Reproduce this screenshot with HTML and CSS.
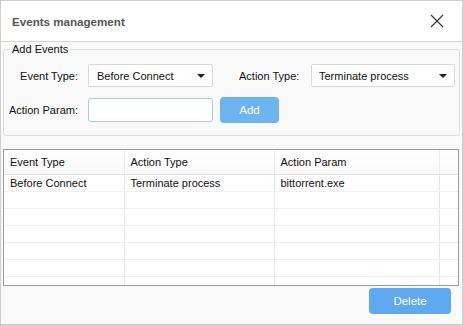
FILE: index.html
```html
<!DOCTYPE html>
<html lang="en">
<head>
    <meta charset="UTF-8">
    <title>Events management</title>
    <link rel="stylesheet" href="styles.css">
</head>
<body>
    <div class="window">
        <div class="titlebar">
            <span class="title">Events management</span>
            <svg class="close" width="14" height="14" viewBox="0 0 14 14">
                <path d="M1 1 L13 13 M13 1 L1 13" stroke="#333" stroke-width="1.2" fill="none"/>
            </svg>
        </div>

        <div class="content">
            <!-- Add Events group -->
            <fieldset class="group">
                <legend>Add Events</legend>
                <div class="row">
                    <label class="label">Event Type:</label>
                    <div class="select">
                        <span>Before Connect</span>
                        <span class="arrow"></span>
                    </div>
                    <label class="label label-action">Action Type:</label>
                    <div class="select select-wide">
                        <span>Terminate process</span>
                        <span class="arrow"></span>
                    </div>
                </div>
                <div class="row row-param">
                    <label class="label">Action Param:</label>
                    <input type="text" class="input">
                    <button class="btn btn-add">Add</button>
                </div>
            </fieldset>

            <!-- Events list -->
            <div class="grid">
                <table>
                    <thead>
                        <tr>
                            <th class="col-event">Event Type</th>
                            <th class="col-action">Action Type</th>
                            <th class="col-param">Action Param</th>
                            <th class="col-fill"></th>
                        </tr>
                    </thead>
                    <tbody>
                        <tr><td>Before Connect</td><td>Terminate process</td><td>bittorrent.exe</td><td></td></tr>
                        <tr><td></td><td></td><td></td><td></td></tr>
                        <tr><td></td><td></td><td></td><td></td></tr>
                        <tr><td></td><td></td><td></td><td></td></tr>
                        <tr><td></td><td></td><td></td><td></td></tr>
                        <tr><td></td><td></td><td></td><td></td></tr>
                        <tr><td></td><td></td><td></td><td></td></tr>
                    </tbody>
                </table>
            </div>

            <div class="footer">
                <button class="btn btn-delete">Delete</button>
            </div>
        </div>
    </div>
</body>
</html>
```

FILE: styles.css
```css
* {
    box-sizing: border-box;
    margin: 0;
    padding: 0;
}

body {
    font-family: "Liberation Sans", Arial, sans-serif;
    font-size: 11px;
    color: #111;
    background: #fff;
}

.window {
    width: 463px;
    height: 325px;
    border: 1px solid #cfcfcf;
    background-color: #f9f9f9;
    overflow: hidden;
}

.titlebar {
    height: 41px;
    background-color: #fff;
    border-bottom: 1px solid #d6d6d6;
    display: flex;
    align-items: center;
    justify-content: space-between;
    padding: 0 18px 0 11px;
}

.title {
    font-weight: bold;
    font-size: 11.6px;
    color: #555;
}

.content {
    padding: 0 2px;
}

/* Group box */
.group {
    border: 1px solid #d8e0e6;
    border-radius: 3px;
    padding: 8px 0 12px 0;
}

.group legend {
    font-size: 11px;
    margin-left: 6px;
    padding: 0 2px;
    line-height: 14px;
}

.row {
    display: flex;
    align-items: center;
    height: 23px;
}

.row-param {
    margin-top: 10px;
    height: 26px;
}

.label {
    flex-shrink: 0;
    white-space: nowrap;
    width: 74px;
    text-align: right;
    margin-right: 10px;
}

.label-action {
    width: 59px;
    margin-left: 26px;
    margin-right: 13px;
}

.select {
    flex-shrink: 0;
    width: 125px;
    height: 23px;
    background: #fff;
    border: 1px solid #d9d9d9;
    border-radius: 2px;
    display: flex;
    align-items: center;
    justify-content: space-between;
    padding: 0 7px 0 8px;
}

.select-wide {
    width: 144px;
    padding-left: 7px;
}

.arrow {
    width: 0;
    height: 0;
    border-left: 4px solid transparent;
    border-right: 4px solid transparent;
    border-top: 4px solid #222;
}

.input {
    flex-shrink: 0;
    width: 125px;
    height: 24px;
    border: 1px solid #a9cbe8;
    border-radius: 3px;
    background: #fff;
}

.btn {
    border: none;
    color: #fff;
    font-family: "Liberation Sans", Arial, sans-serif;
    font-size: 11.5px;
    border-radius: 4px;
    background-color: #5ea9ef;
}

.btn-add {
    flex-shrink: 0;
    width: 59px;
    height: 26px;
    margin-left: 7px;
    background-color: #6db4f2;
}

/* Events table */
.grid {
    margin-top: 13px;
    margin-right: 1px;
    height: 137px;
    border: 1px solid #9a9a9a;
    background: #fff;
    overflow: hidden;
}

table {
    width: 100%;
    border-collapse: collapse;
    table-layout: fixed;
}

th {
    height: 24px;
    font-weight: normal;
    text-align: left;
    padding-left: 6px;
    border-bottom: 1px solid #e2e2e2;
    border-right: 1px solid #ececec;
    background: linear-gradient(#fff, #f8f8f8);
}

td {
    height: 17px;
    padding-left: 6px;
    border-bottom: 1px solid #efefef;
    border-right: 1px solid #eaeaea;
    white-space: nowrap;
}

.col-event { width: 120px; }
.col-action { width: 150px; }
.col-param { width: 165px; }

th:last-child, td:last-child {
    border-right: none;
}

.footer {
    display: flex;
    justify-content: flex-end;
    padding: 2px 9px 0 0;
}

.btn-delete {
    width: 82px;
    height: 26px;
}
```
